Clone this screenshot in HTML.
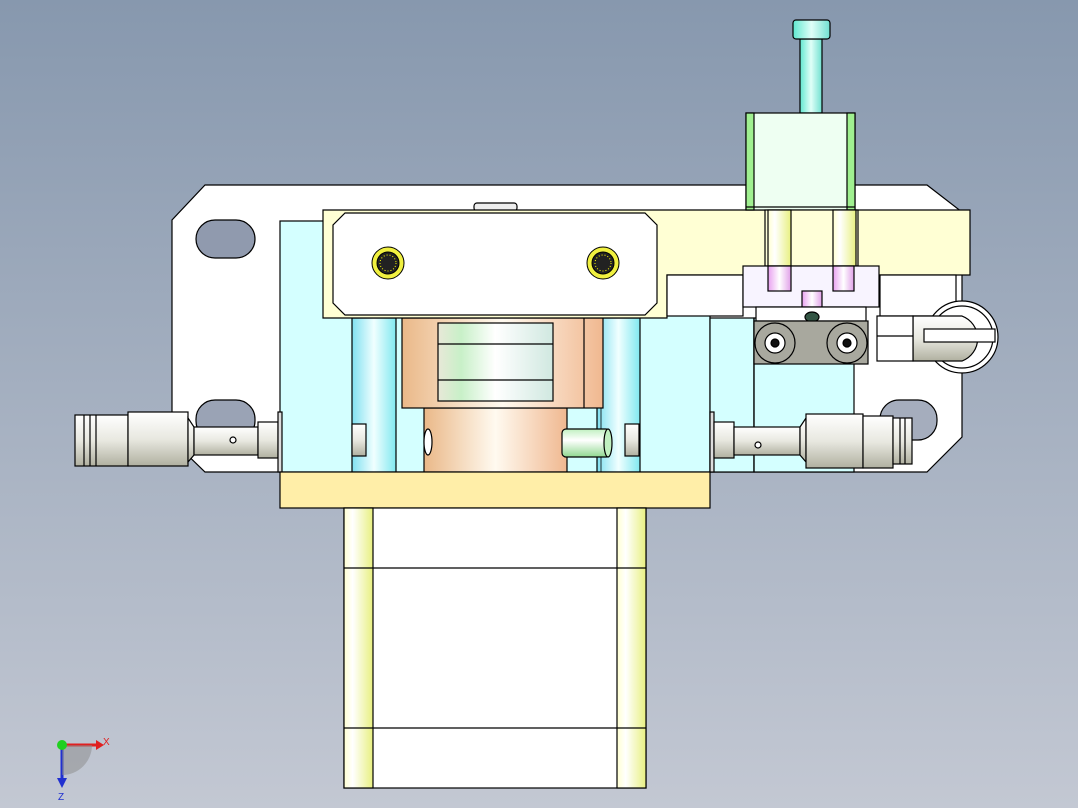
<!DOCTYPE html>
<html><head><meta charset="utf-8"><style>
html,body{margin:0;padding:0;width:1078px;height:808px;overflow:hidden}
svg{display:block}
</style></head><body>
<svg width="1078" height="808" viewBox="0 0 1078 808" xmlns="http://www.w3.org/2000/svg" stroke="#000" stroke-width="1.2">
<defs>
<linearGradient id="bg" x1="0" y1="0" x2="0" y2="1"><stop offset="0" stop-color="#8798ae"/><stop offset="1" stop-color="#c3c8d3"/></linearGradient>
<linearGradient id="cy" x1="0" x2="1"><stop offset="0" stop-color="#80e0f0"/><stop offset=".5" stop-color="#f0ffff"/><stop offset="1" stop-color="#80e8f0"/></linearGradient>
<linearGradient id="cu" x1="0" x2="1"><stop offset="0" stop-color="#eab888"/><stop offset=".5" stop-color="#fffaf0"/><stop offset="1" stop-color="#f0b890"/></linearGradient>
<linearGradient id="gr" x1="0" x2="1"><stop offset="0" stop-color="#e8e8d8"/><stop offset=".2" stop-color="#c8f0c8"/><stop offset=".5" stop-color="#fff"/><stop offset="1" stop-color="#d0e8e0"/></linearGradient>
<linearGradient id="mt" x1="0" y1="0" x2="0" y2="1"><stop offset="0" stop-color="#fff"/><stop offset=".5" stop-color="#e8e8e0"/><stop offset="1" stop-color="#b0b0a0"/></linearGradient>
<linearGradient id="yl" x1="0" x2="1"><stop offset="0" stop-color="#ffffd0"/><stop offset=".3" stop-color="#fff"/><stop offset="1" stop-color="#e8f080"/></linearGradient>
<linearGradient id="pk" x1="0" x2="1"><stop offset="0" stop-color="#e8a0f0"/><stop offset=".5" stop-color="#fff"/><stop offset="1" stop-color="#e0a0e8"/></linearGradient>
<linearGradient id="rod" x1="0" x2="1"><stop offset="0" stop-color="#60e8d0"/><stop offset=".5" stop-color="#e0fff8"/><stop offset="1" stop-color="#70e0d0"/></linearGradient>
<linearGradient id="gp" x1="0" y1="0" x2="0" y2="1"><stop offset="0" stop-color="#c0f0c0"/><stop offset=".4" stop-color="#fff"/><stop offset="1" stop-color="#90d890"/></linearGradient>
</defs>
<rect x="0" y="0" width="1078" height="808" fill="url(#bg)" stroke="none"/>
<!-- back plate -->
<polygon points="205,185 927,185 962,212 962,437 927,472 205,472 172,440 172,220" fill="#fff"/>
<rect x="196" y="220" width="59" height="38" rx="19" fill="#909aae"/>
<rect x="196" y="400" width="59" height="40" rx="19" fill="#9aa3b5"/>
<rect x="880" y="400" width="57" height="40" rx="19" fill="#a5adbd"/>
<!-- cyan block -->
<rect x="280" y="221" width="430" height="251" fill="#d4ffff"/>
<rect x="352" y="318" width="44" height="154" fill="url(#cy)"/>
<rect x="597" y="318" width="43" height="154" fill="url(#cy)"/>
<rect x="710" y="318" width="44" height="154" fill="#d4ffff"/>
<rect x="754" y="318" width="100" height="154" fill="#d4ffff"/>
<line x1="754" y1="318" x2="754" y2="472"/>
<line x1="601" y1="318" x2="601" y2="472" stroke-width=".8"/>
<!-- copper -->
<rect x="424" y="408" width="143" height="64" fill="url(#cu)"/>
<rect x="402" y="318" width="201" height="90" fill="url(#cu)"/>
<line x1="584" y1="318" x2="584" y2="408"/>
<rect x="438" y="323" width="115" height="78" fill="url(#gr)"/>
<line x1="438" y1="344" x2="553" y2="344"/><line x1="438" y1="380" x2="553" y2="380"/>
<ellipse cx="428" cy="442" rx="4" ry="13" fill="#fff"/>
<rect x="562" y="429" width="48" height="28" rx="4" fill="url(#gp)"/>
<ellipse cx="608" cy="443" rx="4" ry="14" fill="#c0f0c0"/>
<rect x="352" y="424" width="14" height="32" fill="url(#mt)"/>
<rect x="625" y="424" width="14" height="32" fill="url(#mt)"/>
<!-- left connector -->
<rect x="75" y="415" width="53" height="51" fill="url(#mt)"/>
<line x1="84" y1="415" x2="84" y2="466"/><line x1="90" y1="415" x2="90" y2="466"/><line x1="96" y1="415" x2="96" y2="466"/>
<rect x="128" y="412" width="60" height="54" fill="url(#mt)"/>
<polygon points="188,418 194,427 194,455 188,462" fill="url(#mt)"/>
<rect x="194" y="427" width="64" height="28" fill="url(#mt)"/>
<circle cx="233" cy="440" r="3" fill="#fff"/>
<rect x="258" y="422" width="20" height="36" fill="url(#mt)"/>
<rect x="278" y="412" width="4" height="60" fill="#ddd"/>
<!-- right connector -->
<rect x="710" y="412" width="4" height="60" fill="#ddd"/>
<rect x="714" y="422" width="20" height="36" fill="url(#mt)"/>
<rect x="734" y="427" width="66" height="28" fill="url(#mt)"/>
<circle cx="758" cy="445" r="3" fill="#fff"/>
<polygon points="800,427 806,418 806,462 800,455" fill="url(#mt)"/>
<rect x="806" y="414" width="57" height="54" fill="url(#mt)"/>
<rect x="863" y="416" width="30" height="52" fill="url(#mt)"/>
<rect x="893" y="418" width="19" height="46" fill="url(#mt)"/>
<line x1="900" y1="418" x2="900" y2="464"/><line x1="905" y1="418" x2="905" y2="464"/>
<!-- bottom plate & motor -->
<rect x="280" y="472" width="430" height="36" fill="#ffeea8"/>
<rect x="344" y="508" width="302" height="280" fill="#fff"/>
<rect x="344" y="508" width="29" height="280" fill="url(#yl)"/>
<rect x="617" y="508" width="29" height="280" fill="url(#yl)"/>
<line x1="344" y1="568" x2="646" y2="568"/><line x1="344" y1="728" x2="646" y2="728"/>
<!-- top yellow plate -->
<rect x="474" y="203" width="43" height="8" rx="3" fill="#eee"/>
<polygon points="323,210 970,210 970,275 667,275 667,318 323,318" fill="#ffffd4"/>
<polygon points="345,213 645,213 657,225 657,303 645,315 345,315 333,303 333,225" fill="#fff"/>
<rect x="667" y="275" width="76" height="41" fill="#fff"/>
<rect x="880" y="275" width="76" height="41" fill="#fff"/>
<g stroke-width="1">
<circle cx="388" cy="263" r="16" fill="#f0f040"/><circle cx="388" cy="263" r="11" fill="#222"/>
<circle cx="388" cy="263" r="8" fill="none" stroke="#ff0" stroke-dasharray="1 2"/>
<circle cx="603" cy="263" r="16" fill="#f0f040"/><circle cx="603" cy="263" r="11" fill="#222"/>
<circle cx="603" cy="263" r="8" fill="none" stroke="#ff0" stroke-dasharray="1 2"/>
</g>
<!-- cylinder -->
<rect x="800" y="39" width="22" height="74" fill="url(#rod)"/>
<rect x="793" y="20" width="37" height="19" rx="3" fill="url(#rod)"/>
<rect x="746" y="113" width="109" height="97" fill="#eefff2"/>
<rect x="746" y="113" width="8" height="97" fill="#a0f090"/>
<rect x="847" y="113" width="8" height="97" fill="#a0f090"/>
<line x1="746" y1="207" x2="855" y2="207"/>
<rect x="765" y="210" width="93" height="56" fill="#ffffd8"/>
<rect x="768" y="210" width="23" height="56" fill="url(#yl)"/>
<rect x="833" y="210" width="23" height="56" fill="url(#yl)"/>
<rect x="743" y="266" width="136" height="41" fill="#f8f4ff"/>
<rect x="768" y="266" width="23" height="25" fill="url(#pk)"/>
<rect x="833" y="266" width="21" height="25" fill="url(#pk)"/>
<rect x="802" y="291" width="20" height="16" fill="url(#pk)"/>
<rect x="756" y="307" width="110" height="14" fill="#fff"/>
<ellipse cx="812" cy="317" rx="7" ry="5" fill="#354"/>
<rect x="754" y="321" width="114" height="43" fill="#a8a89e"/>
<circle cx="775" cy="343" r="20" fill="none"/><circle cx="775" cy="343" r="10" fill="#fff"/><circle cx="775" cy="343" r="4" fill="#111"/>
<circle cx="847" cy="343" r="20" fill="none"/><circle cx="847" cy="343" r="10" fill="#fff"/><circle cx="847" cy="343" r="4" fill="#111"/>
<!-- right fitting -->
<circle cx="962" cy="337" r="36" fill="#fff"/>
<circle cx="962" cy="337" r="31" fill="none"/>
<path d="M913 316 H962 A24 24 0 0 1 962 361 H913 Z" fill="url(#mt)"/>
<rect x="877" y="316" width="36" height="45" fill="#fff"/>
<line x1="877" y1="336" x2="913" y2="336"/>
<rect x="924" y="329" width="71" height="13" fill="#fff"/>
<!-- axis triad -->
<g stroke="none">
<path d="M62 745 L62 782" stroke="#2030d0" stroke-width="3"/>
<path d="M62 745 L96 745" stroke="#e02020" stroke-width="3"/>
<polygon points="96,740 104,745 96,750" fill="#e02020"/>
<polygon points="57,778 62,788 67,778" fill="#2030d0"/>
<path d="M62 745 L92 745 A30 30 0 0 1 62 775 Z" fill="#8a8a8a" opacity=".5"/>
<circle cx="62" cy="745" r="5" fill="#20d020"/>
<text x="103" y="745" font-family="Liberation Sans" font-size="10" fill="#e02020">X</text>
<text x="58" y="800" font-family="Liberation Sans" font-size="10" fill="#2030d0">Z</text>
</g>
</svg>
</body></html>
